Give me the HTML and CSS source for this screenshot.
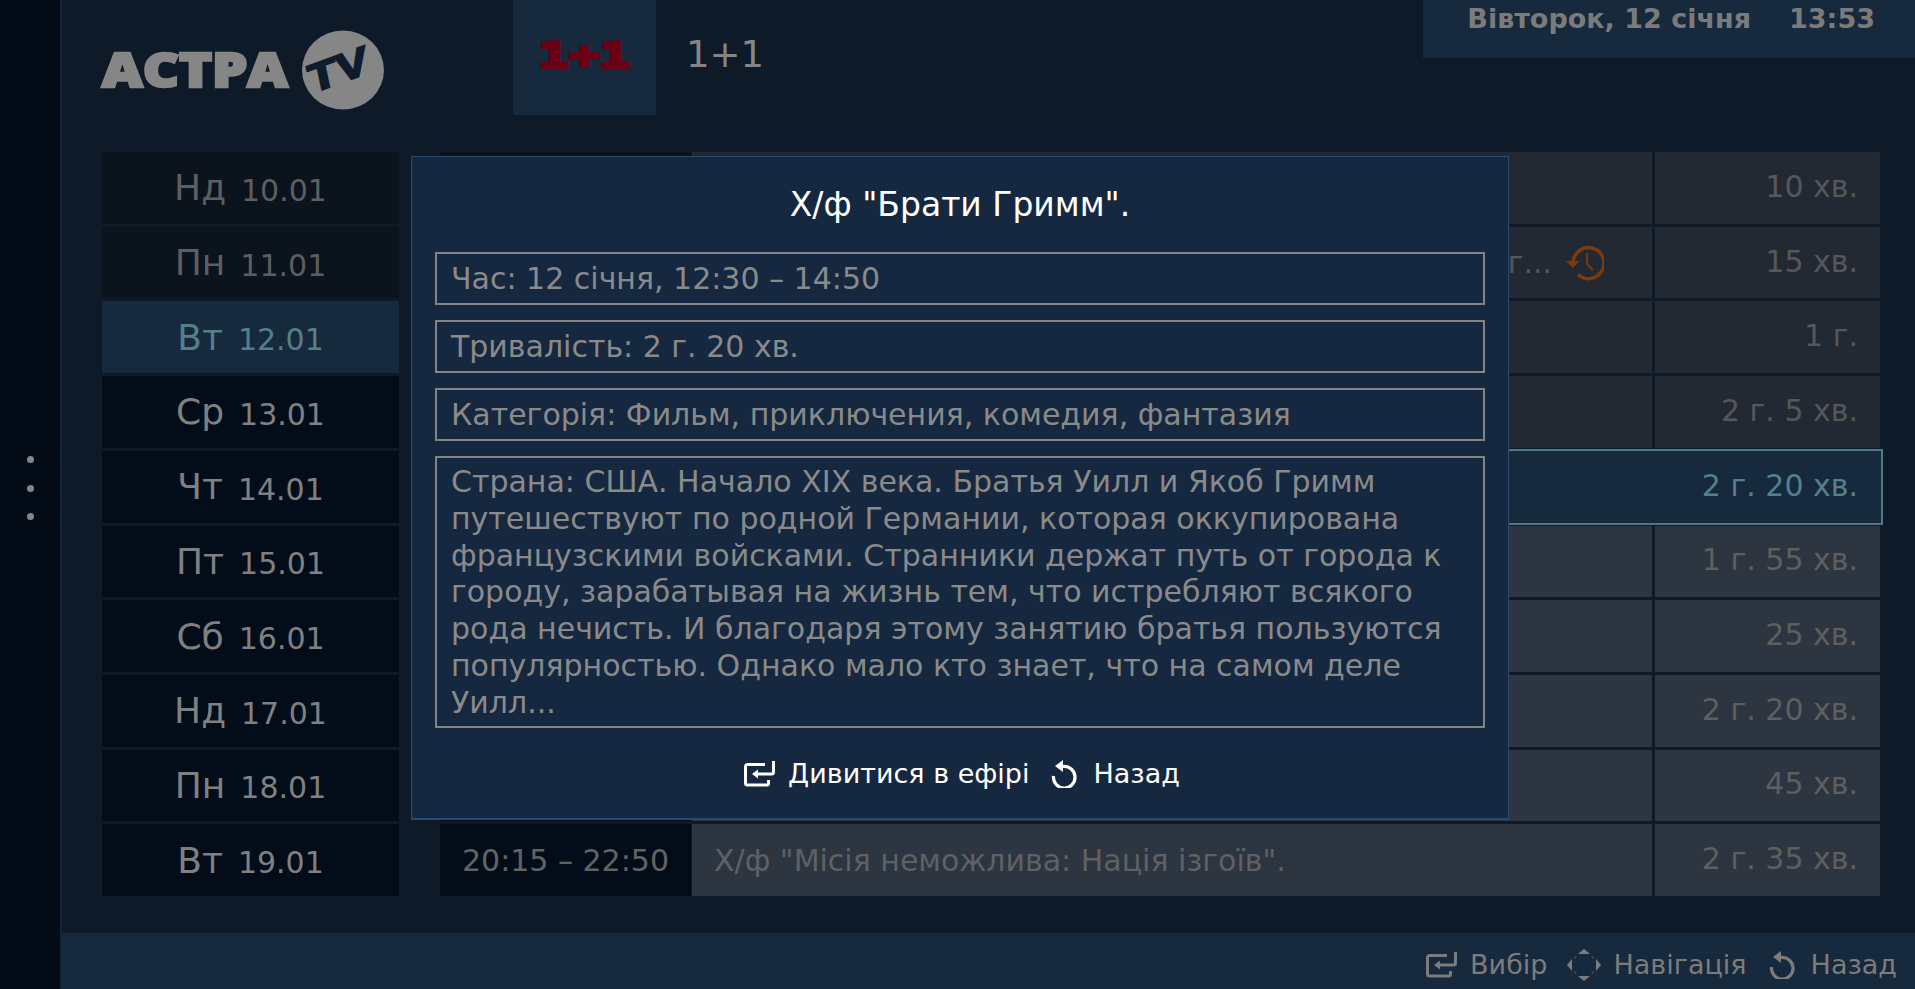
FILE: index.html
```html
<!DOCTYPE html>
<html lang="uk">
<head>
<meta charset="utf-8">
<title>Астра TV</title>
<link rel="stylesheet" href="styles.css">
</head>
<body>
<svg class="defs" width="0" height="0">
  <symbol id="i-enter" viewBox="0 0 31 26"><path d="M21 3.500H3.500a2 2 0 0 0-2 2V22a2 2 0 0 0 2 2H23a1.500 1.500 0 0 0 1.500-1.500V19M29.500 0v11a2 2 0 0 1-2 2H11" fill="none" stroke="currentColor" stroke-width="3"/><path d="M14 8.500 8 13l6 4.500z" fill="currentColor"/></symbol>
  <symbol id="i-back" viewBox="0 0 28 28"><path d="M12 6.500A10.800 10.800 0 1 1 2.500 16" fill="none" stroke="currentColor" stroke-width="3.200"/><path d="M12 0v12L4 6z" fill="currentColor"/></symbol>
  <symbol id="i-nav" viewBox="0 0 34 32"><path d="M17 0l6 5H11zM17 32l-6-5h12zM0 16l5-6v12zM34 16l-5 6V10z" fill="currentColor"/><path d="M7.500 9.500a3 3 0 0 1 2-2M24.500 7.500a3 3 0 0 1 2 2M26.500 22.500a3 3 0 0 1-2 2M9.500 24.500a3 3 0 0 1-2-2" fill="none" stroke="currentColor" stroke-width="1.200" opacity=".55"/></symbol>
</svg>
<div class="app">
  <aside class="rail"><i class="dot"></i><i class="dot"></i><i class="dot"></i></aside>
  <main class="main">
    <header class="head">
      <svg class="logo" viewBox="0 0 290 84" width="290" height="84" role="img" aria-label="Астра TV">
        <text class="logo-word" x="1" y="59" textLength="186" lengthAdjust="spacingAndGlyphs">АСТРА</text>
        <ellipse cx="242" cy="42" rx="41" ry="39.500" class="logo-disc"/>
        <text class="logo-tv" x="-31" y="14" textLength="62" lengthAdjust="spacingAndGlyphs" transform="translate(237 41) rotate(-20) skewX(-8)">TV</text>
      </svg>
      <div class="chan-logo">
        <svg viewBox="0 0 92 29" width="92" height="29" role="img" aria-label="1+1">
          <text class="chan-mark" x="0" y="28" textLength="92" lengthAdjust="spacingAndGlyphs">1+1</text>
        </svg>
      </div>
      <div class="chan-name">1+1</div>
      <div class="clock"><span>Вівторок, 12 січня</span><span>13:53</span></div>
    </header>
    <section class="body">
      <div class="days">
        <div class="day past"><span class="dn">Нд</span><span class="dd">10.01</span></div>
        <div class="day past"><span class="dn">Пн</span><span class="dd">11.01</span></div>
        <div class="day sel"><span class="dn">Вт</span><span class="dd">12.01</span></div>
        <div class="day"><span class="dn">Ср</span><span class="dd">13.01</span></div>
        <div class="day"><span class="dn">Чт</span><span class="dd">14.01</span></div>
        <div class="day"><span class="dn">Пт</span><span class="dd">15.01</span></div>
        <div class="day"><span class="dn">Сб</span><span class="dd">16.01</span></div>
        <div class="day"><span class="dn">Нд</span><span class="dd">17.01</span></div>
        <div class="day"><span class="dn">Пн</span><span class="dd">18.01</span></div>
        <div class="day"><span class="dn">Вт</span><span class="dd">19.01</span></div>
      </div>
      <div class="list">
        <div class="row past"><div class="t"></div><div class="n"></div><div class="d">10 хв.</div></div>
        <div class="row past"><div class="t"></div><div class="n end"><span>г...</span>
          <svg class="rec" viewBox="0 0 40 36" width="40" height="36"><path d="M9 18a15.500 15.500 0 1 1 5 11.500" fill="none" stroke="currentColor" stroke-width="3.500"/><path d="M2 16h13l-6 7z" fill="currentColor"/><path d="M23 8v11l6 6" fill="none" stroke="currentColor" stroke-width="1.800"/></svg>
        </div><div class="d">15 хв.</div></div>
        <div class="row past"><div class="t"></div><div class="n"></div><div class="d">1 г.</div></div>
        <div class="row past"><div class="t"></div><div class="n"></div><div class="d">2 г. 5 хв.</div></div>
        <div class="row sel"><div class="t"></div><div class="n"></div><div class="d">2 г. 20 хв.</div></div>
        <div class="row"><div class="t"></div><div class="n"></div><div class="d">1 г. 55 хв.</div></div>
        <div class="row"><div class="t"></div><div class="n"></div><div class="d">25 хв.</div></div>
        <div class="row"><div class="t"></div><div class="n"></div><div class="d">2 г. 20 хв.</div></div>
        <div class="row"><div class="t"></div><div class="n"></div><div class="d">45 хв.</div></div>
        <div class="row"><div class="t">20:15 – 22:50</div><div class="n">Х/ф "Місія неможлива: Нація ізгоїв".</div><div class="d">2 г. 35 хв.</div></div>
      </div>
    </section>
    <footer class="foot">
      <svg class="ic-enter"><use href="#i-enter"/></svg><span class="lbl">Вибір</span>
      <svg class="ic-nav"><use href="#i-nav"/></svg><span class="lbl">Навігація</span>
      <svg class="ic-back"><use href="#i-back"/></svg><span class="lbl">Назад</span>
    </footer>
  </main>
</div>
<div class="modal">
  <h1 class="m-title">Х/ф "Брати Гримм".</h1>
  <div class="box">Час: 12 січня, 12:30 – 14:50</div>
  <div class="box">Тривалість: 2 г. 20 хв.</div>
  <div class="box">Категорія: Фильм, приключения, комедия, фантазия</div>
  <div class="box desc">Страна: США. Начало XIX века. Братья Уилл и Якоб Гримм путешествуют по родной Германии, которая оккупирована французскими войсками. Странники держат путь от города к городу, зарабатывая на жизнь тем, что истребляют всякого рода нечисть. И благодаря этому занятию братья пользуются популярностью. Однако мало кто знает, что на самом деле Уилл...</div>
  <div class="m-actions">
    <svg class="ic-enter"><use href="#i-enter"/></svg><span class="lbl">Дивитися в ефірі</span>
    <svg class="ic-back"><use href="#i-back"/></svg><span class="lbl">Назад</span>
  </div>
</div>
</body>
</html>
```
FILE: styles.css
```css
* { box-sizing: border-box; }
html, body { margin: 0; height: 100%; overflow: hidden; }
body { background: #0f1a28; font-family: "DejaVu Sans", sans-serif; color: #808080; position: relative; }
.defs { position: absolute; }
.app { display: flex; width: 1915px; height: 989px; }

.rail { width: 62px; flex: none; background: #030b16; border-right: 2px solid #12263b; display: flex; flex-direction: column; align-items: center; justify-content: center; gap: 21.500px; padding-bottom: 13px; }
.dot { width: 7px; height: 7px; border-radius: 50%; background: #868686; }

.main { flex: 1; display: flex; flex-direction: column; min-width: 0; }

.head { height: 152px; flex: none; display: flex; align-items: flex-start; }
.logo { margin: 28px 0 0 39px; flex: none; overflow: visible; }
.logo-word { font: 800 48px "Open Sans", "Liberation Sans", sans-serif; fill: #868686; stroke: #868686; stroke-width: 2.500px; }
.logo-disc { fill: #868686; }
.logo-tv { font: 700 39px "Liberation Sans", sans-serif; fill: #0f1c2c; stroke: #0f1c2c; stroke-width: 2px; }
.chan-logo { width: 143px; height: 115px; margin-left: 122px; background: #17293c; flex: none; padding: 40px 0 0 25px; }
.chan-logo svg { display: block; overflow: visible; }
.chan-mark { font: 700 36px "DejaVu Sans Mono", monospace; fill: #6b0015; stroke: #6b0015; stroke-width: 3px; }
.chan-name { font-size: 37px; line-height: 44px; margin: 33px 0 0 30px; color: #858585; }
.clock { margin-left: auto; width: 492px; height: 58px; flex: none; background: #17293c; display: flex; justify-content: flex-end; gap: 38px; padding: 3px 40px 0 0; font-size: 27px; font-weight: 700; line-height: 32px; color: #7b7b7b; }

.body { display: flex; gap: 41px; padding: 0 34px 0 40px; height: 744px; flex: none; }
.days { width: 297px; flex: none; display: flex; flex-direction: column; gap: 3px; }
.day { flex: 1; min-height: 0; display: flex; align-items: center; justify-content: center; gap: 15px; background: #030d1a; color: #808080; }
.day.past { background: #0b131d; color: #5e5e5e; }
.day.sel { background: #17293c; color: #53808a; }
.dn { font-size: 36px; }
.dd { font-size: 30px; padding-top: 5px; }

.list { flex: 1; min-width: 0; display: flex; flex-direction: column; gap: 3px; }
.row { flex: 1; min-height: 0; display: grid; grid-template-columns: 251px 961px 225px; color: #5f5f5f; }
.t, .n, .d { display: flex; align-items: center; white-space: nowrap; min-width: 0; font-size: 30px; }
.t { background: #030d1a; justify-content: center; width: 251px; color: #636363; }
.n { background: #2c3540; margin-left: 1px; padding-left: 22px; color: #5f6164; }
.d { background: #2c3540; margin-left: 3px; justify-content: flex-end; padding: 0 22px 3px 0; width: 225px; }
.row.past .t { background: #0a1119; }
.row.past .n, .row.past .d { background: #222932; }
.row.past .d, .row.past .n { color: #565759; }
.row.sel { background: #17293c; outline: 2px solid #4e7a85; }
.row.sel .t, .row.sel .n, .row.sel .d { background: none; }
.row.sel .d { color: #53808a; }
.n.end { justify-content: flex-end; gap: 12px; padding-right: 48px; }
.rec { color: #7e3a08; flex: none; }

.foot { margin-top: auto; height: 56px; flex: none; background: #17293c; display: flex; align-items: center; justify-content: flex-end; padding: 7px 18px 0 0; color: #7c7c7c; }
.lbl { font-size: 27px; line-height: 32px; white-space: nowrap; }
.ic-enter { width: 31px; height: 26px; margin-right: 13px; flex: none; }
.ic-nav { width: 34px; height: 32px; margin: 0 12px 0 20px; flex: none; }
.ic-back { width: 28px; height: 28px; margin: 0 14px 0 22px; flex: none; }

.modal { position: absolute; left: 411px; top: 156px; width: 1098px; height: 664px; background: #16283f; border: 1px solid #2a4a72; border-bottom-width: 2px; padding: 0 23px; display: flex; flex-direction: column; }
.m-title { margin: 0; height: 95px; display: flex; align-items: center; justify-content: center; font-size: 33px; font-weight: 400; color: #fff; white-space: nowrap; }
.box { border: 2px solid #848484; color: #8a8a8a; font-size: 30px; line-height: 37px; height: 53px; padding: 6px 14px 0; margin-bottom: 15px; white-space: nowrap; }
.desc { height: 272px; white-space: normal; line-height: 36.800px; padding: 6px 14px 0; margin-bottom: 0; }
.m-actions { flex: 1; display: flex; align-items: center; justify-content: center; color: #fff; padding: 2px 0 0 4px; }
```
